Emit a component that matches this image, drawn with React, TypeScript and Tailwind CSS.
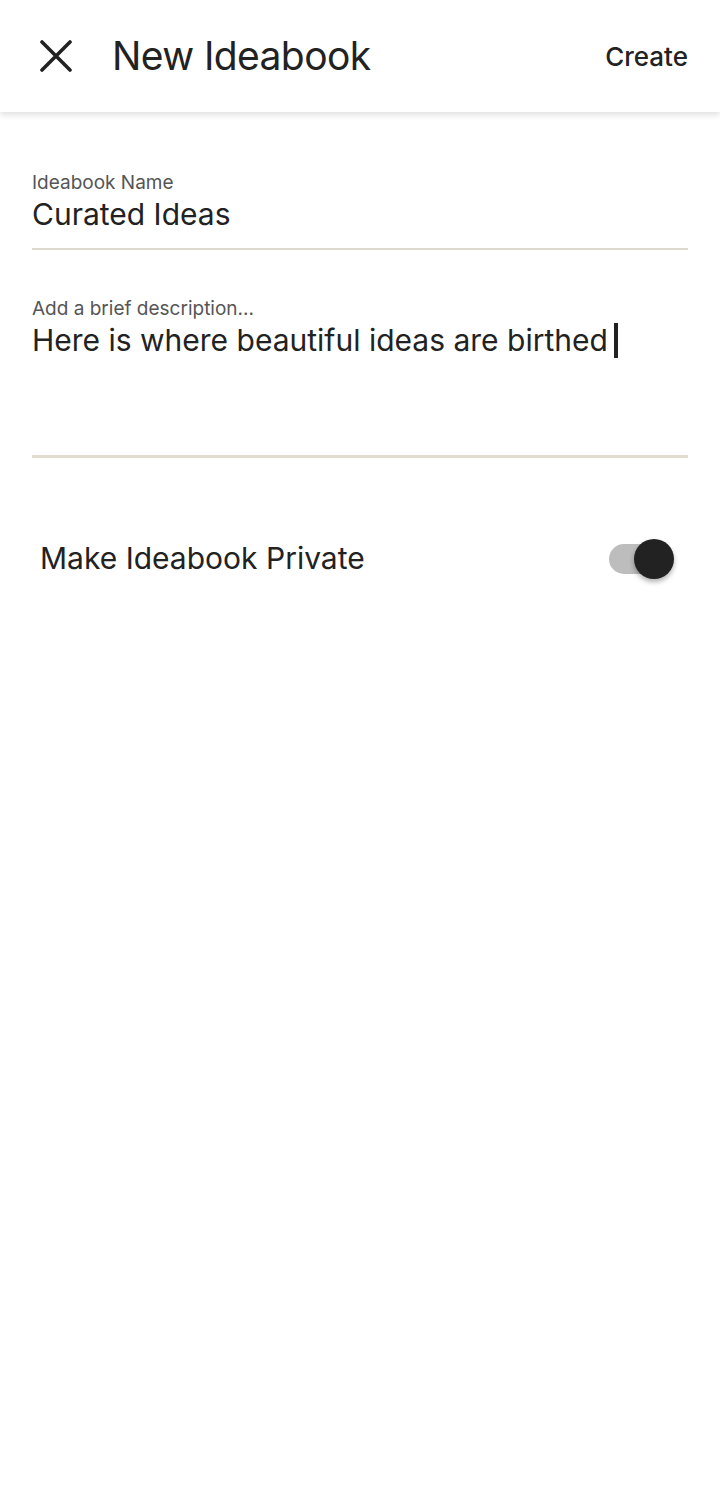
const font = {fontFamily: "Inter, 'Noto Sans', sans-serif"};

const Field = ({label, value, cursor, tall}: {label: string; value: string; cursor?: boolean; tall?: boolean}) => (
    <div className={tall ? "flex flex-col h-[160px] border-b-[3px] border-[#e2ddd0]" : "flex flex-col h-[78px] border-b-2 border-[#dcd9cf]"}>
        <div className="text-[19px] leading-[22px] text-[#555555]">{label}</div>
        <div className="text-[30px] leading-[40px] text-[#222222] flex items-center">
            {value}
            {cursor && <span className="ml-[6px] inline-block w-[4px] h-[35px] bg-[#222222]"/>}
        </div>
    </div>
);

export default function App() {
    return (
        <div className="w-[720px] h-[1507px] bg-white" style={font}>
            <header className="h-[112px] flex items-center px-10 shadow-[0_3px_6px_rgba(0,0,0,0.12)]">
                <svg width="32" height="32" viewBox="0 0 32 32" className="shrink-0">
                    <path d="M2 2 L30 30 M30 2 L2 30" stroke="#222222" strokeWidth="3.6" strokeLinecap="round"/>
                </svg>
                <h1 className="ml-[40px] text-[39px] text-[#222222] tracking-[-0.6px]">New Ideabook</h1>
                <button className="ml-auto -mr-2 text-[26px] font-medium text-[#222222]">Create</button>
            </header>

            <main className="px-8 pt-[60px] flex flex-col gap-[48px]">
                <Field label="Ideabook Name" value="Curated Ideas"/>
                <Field label="Add a brief description..." value="Here is where beautiful ideas are birthed" cursor tall/>
                <div className="flex items-center justify-between pl-2 pr-[27px] mt-[30px]">
                    <span className="text-[30px] text-[#222222]">Make Ideabook Private</span>
                    <div className="relative w-[52px] h-[30px]">
                        <div className="w-[52px] h-[30px] rounded-full bg-[#bdbdbd]"/>
                        <div className="absolute right-[-13px] top-[-5px] w-[40px] h-[40px] rounded-full bg-[#222222] shadow-[0_3px_5px_rgba(0,0,0,0.3)]"/>
                    </div>
                </div>
            </main>
        </div>
    );
}
